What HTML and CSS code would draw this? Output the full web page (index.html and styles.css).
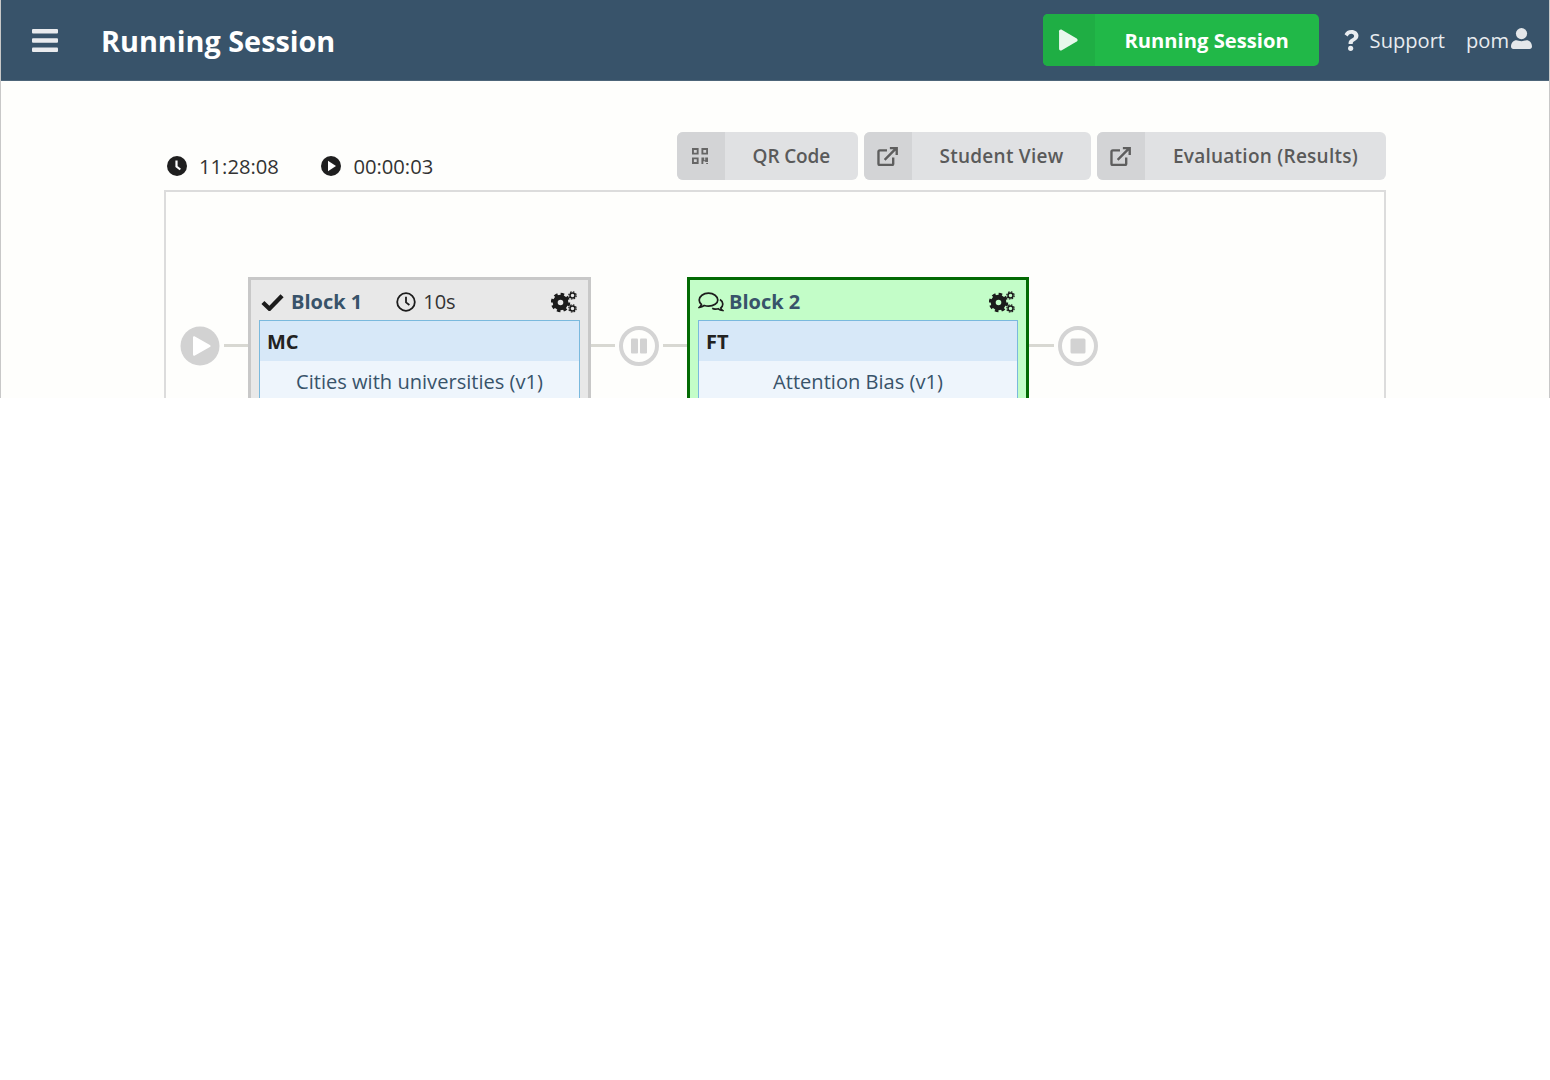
FILE: index.html
```html
<!DOCTYPE html>
<html lang="en">
<head>
<meta charset="utf-8">
<title>Running Session</title>
<link rel="stylesheet" href="styles.css">
</head>
<body>
<div class="app">
  <header class="topbar">
    <svg class="menu-icon" viewBox="0 0 26 23"><rect x="0" y="0" width="26" height="4.6" rx="1"/><rect x="0" y="9.2" width="26" height="4.6" rx="1"/><rect x="0" y="18.4" width="26" height="4.6" rx="1"/></svg>
    <h1 class="title">Running Session</h1>
    <div class="status-btn">
      <span class="status-icon"><svg class="play-icon" viewBox="0 0 19 22" preserveAspectRatio="none"><path d="M1 2.2C1 .8 2.4 0 3.6.7l14.2 8.7c1.1.7 1.1 2.4 0 3.1L3.6 21.3C2.4 22 1 21.2 1 19.8z"/></svg></span>
      <span class="status-label">Running Session</span>
    </div>
    <nav class="top-links">
      <span class="link"><svg class="question-icon" viewBox="0 0 15 22"><path d="M7.6 0C3.9 0 1.6 1.6.2 4.4l3.2 2.4C4.3 5.100 5.400 3.900 7.300 3.900c1.700 0 2.900 1 2.900 2.300 0 1.200-.8 1.900-2.200 2.700-1.800 1-3.600 2.100-3.600 4.800v1h4.400v-.7c0-1.200.8-1.700 2.100-2.500 2-1.200 3.900-2.700 3.900-5.500C14.800 2.500 11.400 0 7.600 0z"/><circle cx="6.600" cy="19.200" r="2.700"/></svg>Support</span>
      <span class="link user">pom<svg class="user-icon" viewBox="0 0 21 21"><circle cx="10.500" cy="5.600" r="5.600"/><path d="M0 18.500C0 15 2.500 12.300 5.500 12.300c1.400 0 3 .9 5 .9s3.600-.9 5-.9c3 0 5.500 2.700 5.500 6.200 0 1.500-1 2.500-2.400 2.500H2.400C1 21 0 20 0 18.500z"/></svg></span>
    </nav>
  </header>

  <main class="content">
    <div class="toolbar">
      <div class="timers">
        <span class="timer"><svg class="timer-icon" viewBox="0 0 20 20"><circle cx="10" cy="10" r="10"/><path class="hand" d="M9.500 4.500v6l3.800 3"/></svg>11:28:08</span>
        <span class="timer"><svg class="timer-icon" viewBox="0 0 20 20"><circle cx="10" cy="10" r="10"/><path class="tri" d="M7 4.800l8 5.200-8 5.200z"/></svg>00:00:03</span>
      </div>
      <div class="actions">
        <a class="action action-qr"><span class="action-icon"><svg class="qr-icon" viewBox="0 0 18 17"><path d="M0 0h7v7H0zM2 2v3h3V2zM10 0h7v7h-7zM12 2v3h3V2zM0 10h7v7H0zM2 12v3h3v-3zM10 10h3v3h1v-3h3v5h-3v-1h-2v3h-2zM15 16h2v1h-2z" fill-rule="evenodd"/></svg></span><span class="action-label">QR Code</span></a>
        <a class="action"><span class="action-icon"><svg class="ext-icon" viewBox="0 0 22 20"><path d="M10.500 3.500H3a1.500 1.500 0 0 0-1.500 1.500v12.500A1.500 1.500 0 0 0 3 19h12.500a1.500 1.500 0 0 0 1.500-1.500V11"/><path d="M8 13.500 20 1.500M13.500 1.200h7.200v7.200"/></svg></span><span class="action-label">Student View</span></a>
        <a class="action"><span class="action-icon"><svg class="ext-icon" viewBox="0 0 22 20"><path d="M10.500 3.500H3a1.500 1.500 0 0 0-1.500 1.500v12.500A1.500 1.500 0 0 0 3 19h12.500a1.500 1.500 0 0 0 1.500-1.500V11"/><path d="M8 13.500 20 1.500M13.500 1.200h7.200v7.200"/></svg></span><span class="action-label">Evaluation (Results)</span></a>
      </div>
    </div>

    <section class="canvas">
      <div class="flow">
        <span class="node node-start"><svg viewBox="0 0 40 40"><circle cx="20" cy="20" r="19.500"/><path class="glyph" d="M13 11.500c0-1 1-1.600 1.900-1.100l15 8.500c.9.500.9 1.700 0 2.200l-15 8.500c-.9.500-1.900-.1-1.900-1.100z"/></svg></span>
        <span class="line line-start"></span>
        <article class="block block-done">
          <div class="block-head">
            <svg class="check-icon" viewBox="0 0 24 18"><path d="M2 9.500l6.800 6.500L22 2.500" /></svg>
            <span class="block-name">Block 1</span>
            <span class="duration"><svg class="small-clock" viewBox="0 0 20 20"><circle cx="10" cy="10" r="8.800"/><path d="M10 4.800v5.600l3.400 2.600"/></svg>10s</span>
            <svg class="cogs-icon" viewBox="0 0 26 22"><circle class="cog-big" cx="9.500" cy="11.500" r="5.300"/><circle class="cog-big-teeth" cx="9.500" cy="11.500" r="8.300"/><circle class="cog-small" cx="21.500" cy="4.500" r="2.500"/><circle class="cog-small-teeth" cx="21.500" cy="4.500" r="3.700"/><circle class="cog-small" cx="21.500" cy="17.500" r="2.500"/><circle class="cog-small-teeth" cx="21.500" cy="17.500" r="3.700"/></svg>
          </div>
          <div class="task">
            <div class="task-type">MC</div>
            <div class="task-name">Cities with universities (v1)</div>
          </div>
        </article>
        <span class="line line-mid-a"></span>
        <span class="node"><svg viewBox="0 0 40 40"><circle class="ring" cx="20" cy="20" r="18"/><rect class="glyph" x="12" y="12.500" width="7" height="15" rx="1"/><rect class="glyph" x="21" y="12.500" width="7" height="15" rx="1"/></svg></span>
        <span class="line line-mid-b"></span>
        <article class="block block-active">
          <div class="block-head">
            <svg class="comments-icon" viewBox="0 0 26 20"><path d="M10.500 1.200C5.300 1.200 1.200 4.300 1.200 8c0 1.700.8 3.200 2.200 4.400-.4 1.200-1.200 2.100-2 2.900 1.800-.2 3.500-.9 4.800-1.800 1.300.4 2.800.7 4.300.7 5.200 0 9.300-3 9.300-6.200 0-3.700-4.100-6.800-9.300-6.800z"/><path d="M22 7.500c1.700 1.100 2.800 2.700 2.800 4.500 0 1.500-.7 2.900-2 3.900.3 1 .9 1.900 1.700 2.500-1.700-.1-3.100-.7-4.200-1.600-1.100.3-2.200.4-3.300.3-1-.1-2-.5-2.800-.9"/></svg>
            <span class="block-name">Block 2</span>
            <svg class="cogs-icon" viewBox="0 0 26 22"><circle class="cog-big" cx="9.500" cy="11.500" r="5.300"/><circle class="cog-big-teeth" cx="9.500" cy="11.500" r="8.300"/><circle class="cog-small" cx="21.500" cy="4.500" r="2.500"/><circle class="cog-small-teeth" cx="21.500" cy="4.500" r="3.700"/><circle class="cog-small" cx="21.500" cy="17.500" r="2.500"/><circle class="cog-small-teeth" cx="21.500" cy="17.500" r="3.700"/></svg>
          </div>
          <div class="task">
            <div class="task-type">FT</div>
            <div class="task-name">Attention Bias (v1)</div>
          </div>
        </article>
        <span class="line line-end"></span>
        <span class="node"><svg viewBox="0 0 40 40"><circle class="ring" cx="20" cy="20" r="18"/><rect class="glyph" x="12.500" y="12.500" width="15" height="15" rx="1.500"/></svg></span>
      </div>
    </section>
  </main>
</div>
</body>
</html>
```
FILE: styles.css
```css
* { box-sizing: border-box; }
html, body { margin: 0; padding: 0; background: #fff; }
body { font-family: "Open Sans", "Liberation Sans", sans-serif; color: #222; }
.app {
  height: 398px;
  overflow: hidden;
  background: #fefefc;
  border-left: 1px solid #c8c8c8;
  border-right: 1px solid #c8c8c8;
}
.topbar {
  height: 81px;
  margin: 0 -1px;
  background: #38536a;
  border-left: 1px solid #4a4f55;
  border-bottom: 1px solid #4d6579;
  display: flex;
  align-items: center;
  color: #fff;
  padding: 0 18px 0 31px;
}
.menu-icon { width: 26px; height: 23px; fill: #e9ebee; flex: none; }
.title { margin: 2px 0 0 43px; font-size: 28.8px; font-weight: 700; line-height: 1; flex: 1; white-space: nowrap; }
.status-btn {
  display: flex;
  width: 276px;
  height: 52px;
  border-radius: 5px;
  overflow: hidden;
  background: #21b848;
}
.status-icon { width: 52px; background: #1fae44; display: flex; align-items: center; justify-content: center; padding-right: 2px; }
.play-icon { width: 20px; height: 22px; fill: #e8f8ec; }
.status-label { flex: 1; text-align: center; font-size: 20.2px; font-weight: 700; line-height: 53px; color: #fff; }
.top-links { display: flex; align-items: center; gap: 21px; margin-left: 25px; font-size: 20.1px; color: #e8ecf0; }
.link { display: flex; align-items: center; }
.question-icon { width: 15px; height: 21px; fill: #e8ecf0; margin-right: 11px; }
.user-icon { width: 21px; height: 21px; fill: #e4e7ea; margin: -4px 0 0 2px; }

.content { padding: 51px 0 0; }
.toolbar {
  width: 1222px;
  margin: 0 auto;
  display: flex;
  justify-content: space-between;
  height: 58px;
}
.timers { display: flex; gap: 42.5px; padding: 20px 0 0 3px; font-size: 20.2px; line-height: 28px; color: #333; }
.timer { display: flex; align-items: center; height: 28px; }
.timer-icon { width: 20px; height: 20px; fill: #1f1f1f; margin-right: 12px; }
.hand { fill: none; stroke: #fff; stroke-width: 2.200; }
.tri { fill: #fff; }
.actions { display: flex; gap: 5.5px; }
.action {
  display: flex;
  height: 48px;
  border-radius: 6px;
  overflow: hidden;
  background: #e0e1e3;
  color: #5a5a5a;
  font-size: 19px;
  font-weight: 600;
  line-height: 48px;
  letter-spacing: .25px;
}
.action-qr { letter-spacing: -.15px; }
.action-icon { width: 48px; background: #d3d4d6; display: flex; align-items: center; justify-content: center; }
.action-label { padding: 0 28px; white-space: nowrap; }
.qr-icon { width: 17px; height: 16px; fill: #666; }
.ext-icon { width: 21px; height: 19px; fill: none; stroke: #5e5e5e; stroke-width: 2.500; }

.canvas {
  width: 1222px;
  height: 300px;
  margin: 0 auto;
  border: 2px solid #dcdcdc;
  padding: 85px 0 0 14px;
}
.flow { display: flex; align-items: flex-start; }
.node { width: 40px; height: 40px; margin-top: 49px; flex: none; }
.node svg { display: block; width: 40px; height: 40px; }
.node .ring { fill: none; stroke: #d4d4d4; stroke-width: 4; }
.node .glyph { fill: #d2d2d2; }
.node-start circle { fill: #d2d2d2; }
.node-start .glyph { fill: #fff; }
.line { height: 3px; margin-top: 67px; background: #d8d8d2; flex: none; }
.line-start { width: 24px; margin-left: 4px; }
.line-mid-a { width: 24px; margin-right: 4px; }
.line-mid-b { width: 24px; margin-left: 4px; }
.line-end { width: 25px; margin-right: 4px; }

.block { width: 343px; height: 200px; border: 3px solid; padding: 0 8px; flex: none; }
.block-done { background: #e8e8e8; border-color: #c8c8c8; }
.block-active { width: 342px; background: #c3fdc8; border-color: #036a03; }
.block-head { display: flex; align-items: center; height: 40px; padding: 4px 3px 0 2px; }
.block-active .block-head { padding-left: 0; }
.block-name { font-size: 20px; font-weight: 700; color: #38536a; line-height: 1; }
.check-icon { width: 23px; height: 18px; fill: none; stroke: #1c1c1c; stroke-width: 4.500; margin-right: 7px; }
.duration { display: flex; align-items: center; margin-left: 34px; font-size: 20px; color: #333; line-height: 1; flex: 1; }
.small-clock { width: 20px; height: 20px; fill: none; stroke: #1c1c1c; stroke-width: 1.800; margin-right: 7px; }
.cogs-icon { width: 26px; height: 22px; flex: none; margin-left: auto; }
.cog-big { fill: none; stroke: #1c1c1c; stroke-width: 5; }
.cog-big-teeth { fill: none; stroke: #1c1c1c; stroke-width: 2.800; stroke-dasharray: 3.500 3; }
.cog-small { fill: none; stroke: #1c1c1c; stroke-width: 1.500; }
.cog-small-teeth { fill: none; stroke: #1c1c1c; stroke-width: 1.200; stroke-dasharray: 1.600 1.300; }
.comments-icon { width: 26px; height: 20px; fill: none; stroke: #1c1c1c; stroke-width: 1.700; margin-right: 5px; }

.task { border: 1px solid #7ab9dd; background: #eef5fc; }
.task-type { height: 40px; padding-left: 7px; background: #d7e8f8; font-size: 20px; font-weight: 700; line-height: 41px; color: #222; }
.task-name { height: 80px; text-align: center; font-size: 20.1px; line-height: 42px; color: #38536a; }
```
